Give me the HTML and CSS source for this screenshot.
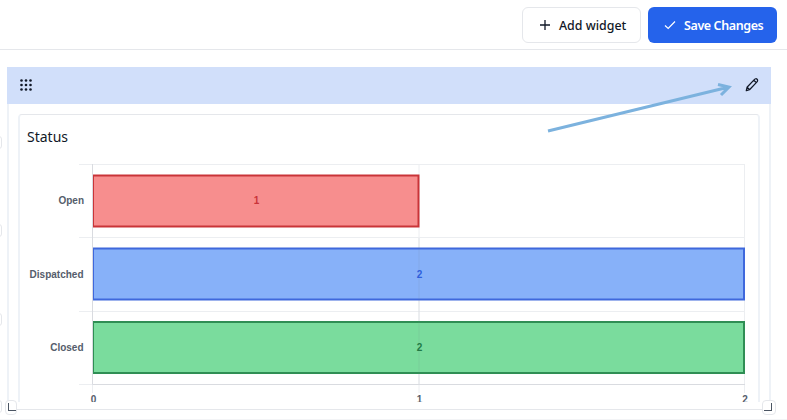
FILE: index.html
```html
<!DOCTYPE html>
<html lang="en">
<head>
<meta charset="utf-8">
<title>Status widget</title>
<link rel="stylesheet" href="styles.css">
</head>
<body>
<header class="toolbar">
  <button class="btn btn-light">
    <svg class="ico" viewBox="0 0 12 12" width="12" height="12"><path d="M6 1v10M1 6h10" fill="none" stroke="#111827" stroke-width="1.3"/></svg>
    <span>Add widget</span>
  </button>
  <button class="btn btn-primary">
    <svg class="ico" viewBox="0 0 12 10" width="12" height="10"><path d="M1 5.5l3.2 3L11 1.5" fill="none" stroke="#fff" stroke-width="1.2"/></svg>
    <span>Save Changes</span>
  </button>
</header>
<main class="canvas">
  <span class="side-tab tab-1"></span>
  <span class="side-tab tab-2"></span>
  <span class="side-tab tab-3"></span>
  <span class="side-tab tab-4"></span>
  <section class="widget">
    <div class="widget-head">
      <svg class="grip" viewBox="0 0 12 12" width="12" height="12" fill="#111827">
        <circle cx="1.5" cy="1.5" r="1.3"/><circle cx="6" cy="1.5" r="1.3"/><circle cx="10.5" cy="1.5" r="1.3"/>
        <circle cx="1.5" cy="6" r="1.3"/><circle cx="6" cy="6" r="1.3"/><circle cx="10.5" cy="6" r="1.3"/>
        <circle cx="1.5" cy="10.5" r="1.3"/><circle cx="6" cy="10.5" r="1.3"/><circle cx="10.5" cy="10.5" r="1.3"/>
      </svg>
      <svg class="pencil" viewBox="0 0 14 14" width="15" height="15"><path d="M1.2 12.8l.7-3.2 7-7.4c.7-.7 1.7-.8 2.4-.1s.6 1.7-.1 2.4l-7 7.4zM8.2 3l2.7 2.6M2 9.6l2.3 2.2" fill="none" stroke="#111827" stroke-width="1.15" stroke-linejoin="round"/></svg>
    </div>
    <div class="card">
      <h2 class="card-title">Status</h2>
      <svg class="chart" viewBox="0 0 740 265" width="740" height="265">
        <g class="grid">
          <path d="M61 .5H727M61 73.5H727M61 147.5H727M61 220.5H727"/>
          <path d="M74.5 0V229M401 0V229M726.5 0V229"/>
        </g>
        <rect class="bar red" x="75" y="11.5" width="325.5" height="51"/>
        <rect class="bar blue" x="75" y="84.5" width="651" height="51"/>
        <rect class="bar green" x="75" y="158" width="651" height="51"/>
        <path class="gridline-over" d="M401 74V220"/>
        <path class="axis" d="M74.5 0V220.5M74.5 220.5H727"/>
        <text class="cat" x="66" y="40" text-anchor="end">Open</text>
        <text class="cat" x="65.5" y="114" text-anchor="end">Dispatched</text>
        <text class="cat" x="65.5" y="187" text-anchor="end">Closed</text>
        <text class="val v-red" x="238.5" y="40" text-anchor="middle">1</text>
        <text class="val v-blue" x="401.5" y="114" text-anchor="middle">2</text>
        <text class="val v-green" x="401.5" y="187" text-anchor="middle">2</text>
        <text class="tick" x="75.5" y="239" text-anchor="middle">0</text>
        <text class="tick" x="401.5" y="239" text-anchor="middle">1</text>
        <text class="tick" x="727" y="239" text-anchor="middle">2</text>
      </svg>
    </div>
    <span class="base-line"></span>
    <span class="handle handle-l"></span>
    <span class="handle handle-r"></span>
  </section>
  <svg class="arrow" viewBox="0 0 190 52" width="190" height="52"><path d="M2 50L183 6M172 3.5l11 2.5-8 8" fill="none" stroke="#7cb2de" stroke-width="3"/></svg>
</main>
</body>
</html>
```
FILE: styles.css
```css
* { box-sizing: border-box; }
html, body { margin: 0; height: 100%; overflow: hidden; background: #fff; }
body { font-family: "Noto Sans", "Open Sans", sans-serif; color: #111827; }
.toolbar {
  height: 50px;
  display: flex;
  justify-content: flex-end;
  align-items: flex-start;
  gap: 7px;
  padding: 7px 10px 0 0;
  border-bottom: 1px solid #e5e7eb;
}
.btn {
  height: 36px;
  display: flex;
  align-items: center;
  border-radius: 6px;
  font: 600 12.5px "Noto Sans", sans-serif;
  padding: 0;
}
.btn-light { width: 119px; background: #fff; color: #111827; border: 1px solid #e5e7eb; gap: 8px; padding-left: 16px; font-weight: 500; font-size: 12.4px; }
.btn-primary { width: 129px; background: #2563eb; color: #fff; border: 0; gap: 8px; padding-left: 16px; letter-spacing: -.4px; }
.ico { flex: none; }
.canvas { position: relative; height: 370px; padding: 17px 16px 0 7px; border-bottom: 1px solid #f3f4f6; }
.widget {
  position: relative;
  height: 334px;
  border: solid #eef2f7;
  border-width: 0 2px;
}
.widget-head {
  height: 37px;
  background: #d1dffa;
  display: flex;
  align-items: center;
  justify-content: space-between;
  padding: 0 11px 2px 13px;
  margin: 0 -2px;
}
.card {
  margin: 10px 9px 0;
  height: 288px;
  border: solid #eef2f7;
  border-width: 1px 2px 0;
  border-top-color: #e5e7eb;
  border-radius: 4px 4px 0 0;
  background: #fff;
  overflow: hidden;
}
.card-title { margin: 0; padding: 12px 0 0 7px; height: 50px; font: 400 14px/20px "Noto Sans", sans-serif; color: #111827; }
.chart { display: block; margin: -1px 0 0 -2px; }
.grid path { stroke: #eceef1; fill: none; stroke-width: 1; }
.gridline-over { stroke: rgba(120,130,150,.14); stroke-width: 1; }
.axis { stroke: #d9dbe0; fill: none; stroke-width: 1; }
.bar { stroke-width: 2; }
.red { fill: #f78e8e; stroke: #c93438; }
.blue { fill: #87b1f9; stroke: #3f68dc; }
.green { fill: #7adc9d; stroke: #2f8e54; }
text { font-family: "Liberation Sans", Arial, sans-serif; font-size: 10px; }
.cat { font-weight: 700; fill: #555d6b; }
.tick { font-weight: 700; fill: #555d6b; }
.val { font-weight: 700; }
.v-red { fill: #c9343a; }
.v-blue { fill: #2f5fdc; }
.v-green { fill: #217a45; }
.arrow { position: absolute; left: 546px; top: 31px; }
.side-tab { position: absolute; left: -4px; width: 6px; height: 13px; border: 1px solid #e5e7eb; border-radius: 3px; background: #fff; }
.tab-1 { top: 86px; }
.tab-2 { top: 174px; }
.tab-3 { top: 263px; }
.tab-4 { top: 350px; }
.base-line { position: absolute; left: 7px; right: 6px; top: 342px; height: 1px; background: #e5e7eb; }
.handle { position: absolute; top: 333px; height: 15px; background: #fff; border: 1px solid #e5e7eb; border-radius: 4px; }
.handle::after { content: ""; position: absolute; width: 7px; height: 7px; bottom: 3px; border-bottom: 1px solid #4b5563; }
.handle-l { left: -4px; width: 12px; }
.handle-l::after { left: 2px; border-left: 1px solid #4b5563; }
.handle-r { right: -7px; width: 14px; }
.handle-r::after { right: 3px; border-right: 1px solid #4b5563; }
```
